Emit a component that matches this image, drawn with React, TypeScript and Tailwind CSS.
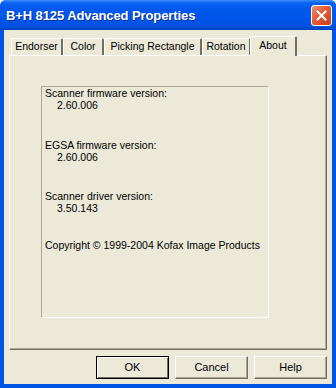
const tabs = [
  { label: "Endorser", w: "w-[52px]" },
  { label: "Color", w: "w-[41px]" },
  { label: "Picking Rectangle", w: "w-[98px]" },
  { label: "Rotation", w: "w-[49px]" },
];

const Btn = ({ label, primary }: { label: string; primary?: boolean }) => (
  <div
    className={
      "w-[73px] h-[23px] flex items-center justify-center text-[11px] text-black bg-[#ECE9D8] " +
      (primary
        ? "border border-black shadow-[inset_1px_1px_0_#fff,inset_-1px_-1px_0_#716F64]"
        : "border border-t-white border-l-white border-r-[#716F64] border-b-[#716F64] shadow-[inset_-1px_-1px_0_#ACA899]")
    }
  >
    {label}
  </div>
);

export default function App() {
  return (
    <div
      className="w-[336px] h-[388px] flex flex-col overflow-hidden rounded-t-[6px] bg-[#0054E3]"
      style={{ fontFamily: '"Liberation Sans", Arial, sans-serif' }}
    >
      {/* title bar */}
      <div className="h-[30px] flex items-center pl-[6px] pr-[4px] bg-[linear-gradient(to_bottom,#3C8EFF_0%,#0A62F0_10%,#0058EE_30%,#0055E8_70%,#0050DD_90%,#0040BC_100%)]">
        <span className="flex-1 pt-[1px] text-white font-bold text-[13px] tracking-[-0.1px] [text-shadow:1px_1px_0_#0B2F9A]">
          B+H 8125 Advanced Properties
        </span>
        <div className="w-[21px] h-[21px] rounded-[3px] border border-white bg-[linear-gradient(135deg,#F08E6E_0%,#E45A36_45%,#C9401E_100%)] flex items-center justify-center">
          <svg width="11" height="11" viewBox="0 0 11 11">
            <path d="M1.5 1.5 L9.5 9.5 M9.5 1.5 L1.5 9.5" stroke="#fff" strokeWidth="2" strokeLinecap="square" />
          </svg>
        </div>
      </div>

      {/* client area */}
      <div className="flex-1 mx-[4px] mb-[4px] bg-[#ECE9D8] flex flex-col px-[5px] pt-[6px]">
        {/* tab strip */}
        <div className="h-[19px] flex items-end pl-[2px] relative z-10">
          {tabs.map((t) => (
            <div
              key={t.label}
              className={`${t.w} h-[17px] flex items-center justify-center text-[10.5px] text-black border-t border-l border-t-white border-l-white border-r-2 border-r-[#716F64] rounded-tl-[2px] rounded-tr-[2px]`}
            >
              {t.label}
            </div>
          ))}
          <div className="w-[47px] h-[20px] -ml-[1px] -mb-[1px] pb-[2px] flex items-center justify-center text-[10.5px] text-black bg-[#ECE9D8] border-t border-l border-t-white border-l-white border-r-2 border-r-[#716F64] rounded-tl-[2px] rounded-tr-[2px]">
            About
          </div>
        </div>

        {/* tab panel */}
        <div className="h-[295px] border-t border-l border-t-white border-l-white border-r border-b border-r-[#716F64] border-b-[#716F64] shadow-[inset_-1px_-1px_0_#ACA899] pl-[31px] pt-[30px]">
          <div className="w-[228px] h-[232px] border-t border-l border-t-[#ACA899] border-l-[#ACA899] border-r border-b border-r-white border-b-white pl-[3px] text-[10.5px] leading-[12px] text-black whitespace-nowrap">
            <div>Scanner firmware version:</div>
            <div className="pl-[12px]">2.60.006</div>
            <div className="mt-[28px]">EGSA firmware version:</div>
            <div className="pl-[12px]">2.60.006</div>
            <div className="mt-[27px]">Scanner driver version:</div>
            <div className="pl-[12px]">3.50.143</div>
            <div className="mt-[25px]">Copyright © 1999-2004 Kofax Image Products</div>
          </div>
        </div>

        {/* buttons */}
        <div className="mt-[6px] flex justify-end gap-[6px]">
          <Btn label="OK" primary />
          <Btn label="Cancel" />
          <Btn label="Help" />
        </div>
      </div>
    </div>
  );
}
